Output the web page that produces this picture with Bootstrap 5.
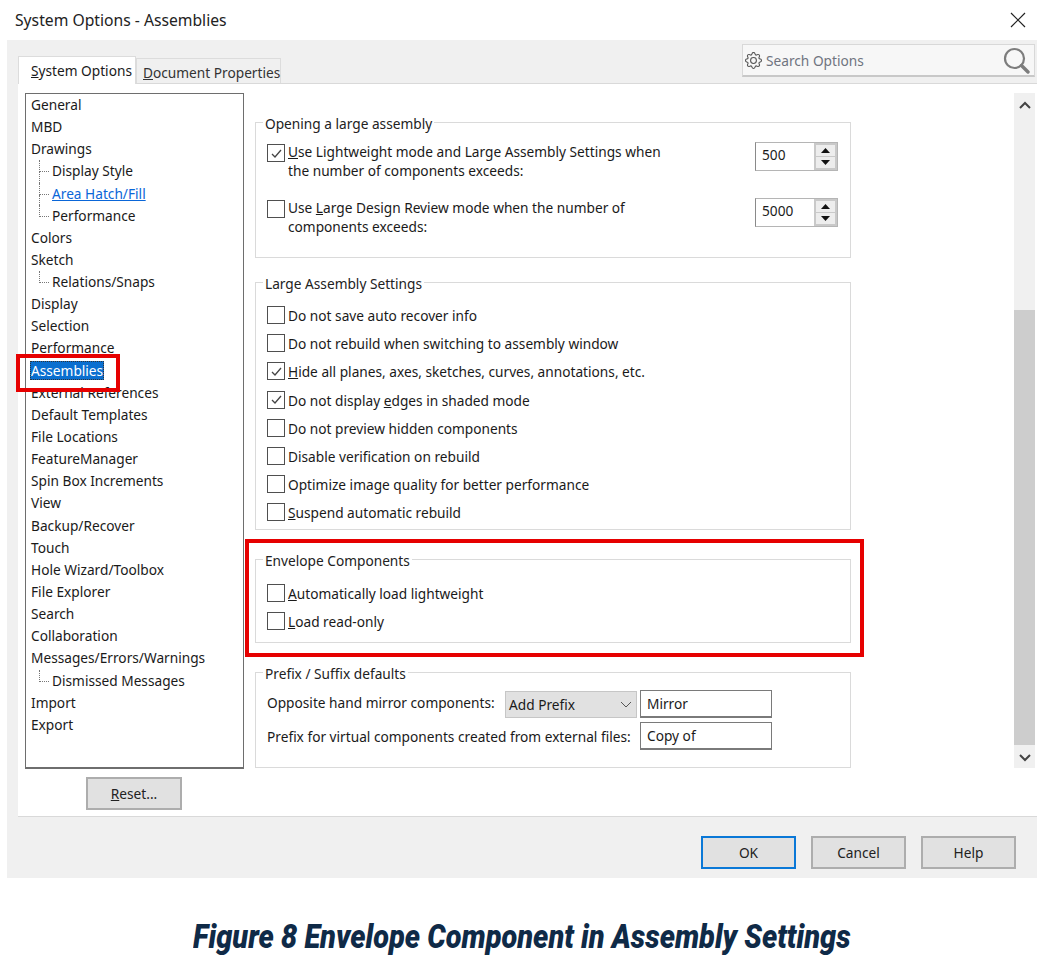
<!DOCTYPE html>
<html lang="en">
<head>
<meta charset="utf-8">
<title>System Options - Assemblies</title>
<link rel="stylesheet" href="https://cdn.jsdelivr.net/npm/bootstrap@5.3.0/dist/css/bootstrap.min.css">
<style>
html,body{margin:0;background:#fff}
body{font-family:"Noto Sans","Open Sans",sans-serif;font-size:13.7px;line-height:19px;color:#1a1a1a}
.sheet{position:relative;width:1044px;height:964px;overflow:hidden}
.titlebar{height:40px;padding-left:15px;font-size:15.7px;color:#222}
.closex{margin-right:18px}
.dlg{width:1030px;height:838px;margin-left:7px;background:#f0f0f0}
.tabstrip{height:43px;padding-left:11px}
.tabon,.taboff{border:1px solid #dcdcdc;border-bottom:0;white-space:nowrap}
.tabon{width:118px;height:28px;background:#fff;padding:4px 0 0 12px;position:relative;z-index:1;margin-bottom:-1px}
.taboff{width:145px;height:25px;background:#f0f0f0;padding:4px 0 0 6px;color:#333}
.searchbox{width:293px;height:33px;margin:4px 2px 0 auto;background:#f7f7f7;border:1px solid #d8d8d8;border-bottom:2px solid #c8c8c8;padding-left:2px;color:#6f7480}
.panel{margin-left:11px;height:734px;background:#fff;border-top:1px solid #d9d9d9;border-bottom:1px solid #d9d9d9;padding:9px 2px 0 7px}
.leftcol{width:219px}
.treebox{height:676px;border:1px solid #6e6e6e;border-bottom-width:2px;padding:0 0 0 5px;line-height:22.14px}
.treebox a{color:#0a66d8;text-decoration:underline}
.branch{margin-left:8px}
.leaf{padding-left:13px;position:relative;height:22.14px}
.leaf::before{content:"";position:absolute;left:0;top:0;height:12px;width:10px;border-left:1px dotted #777;border-bottom:1px dotted #777}
.leaf:not(:last-child)::after{content:"";position:absolute;left:0;top:12px;bottom:0;border-left:1px dotted #777}
.selitem{display:inline-block;background:#0a6fd0;color:#fff;outline:1px dotted #333;outline-offset:-1px;line-height:19px;padding:0 1px;margin-left:-1px}
.resetbtn,.dbtn{height:33px;background:#e1e1e1;border:2px solid #adadad;color:#222;display:flex;align-items:center;justify-content:center;padding:0}
.resetbtn{width:96px;margin:8px 0 0 61px}
.dbtn{width:95px}
.dbtn.isdefault{border-color:#0a78d7}
.midcol{width:596px;margin-left:11px;padding-top:18px}
.grp{border:1px solid #dadada;margin:0;padding:0 12px 0 11px;min-width:0;display:block}
.grp legend{float:none;width:auto;font-size:13.7px;line-height:20px;margin:0 0 0 -4px;padding:3px 2px 0;color:#222}
.g1{height:147px}.g2{height:259px;margin-top:13px}.g3{height:95px;margin-top:18px}.g4{height:107px;margin-top:18px}
.chkrow{display:flex;align-items:flex-start;gap:3px}
.chkbox{flex:none;width:18px;height:18px;border:1px solid #4f4f4f;background:#fff;display:flex;align-items:center;justify-content:center}
.lines2 .chkbox{margin-top:2px}
.g2 .chkrow,.g3 .chkrow{height:28.2px}
.toprow{margin-top:8px}.nextrow{margin-top:18px}
.listtop{margin-top:12px}.envtop{margin-top:13px}
.spinbox{flex:none;width:83px;height:29px;display:flex;border:1px solid #b5b5b5;border-left-color:#8a8a8a;background:#fff}
.spinval{flex:1;padding:2px 0 0 6px}
.spinbtns{width:23px;background:#c9c9c9;padding:2px 2px;display:flex;flex-direction:column;gap:1px}
.spinbtns span{flex:1;background:#ededed;display:flex;align-items:center;justify-content:center}
.optlabel{white-space:nowrap;flex:none}
.lblshort{width:238px;margin-bottom:3px}.lbllong{width:373px}
.prefrow1{margin-top:6px}.prefrow2{margin-top:4px}
.selbox{width:132px;height:27px;margin-right:3px;background:#e1e1e1;border:1px solid #c6c6c6;padding:0 0 0 3px}
.txtin{width:132px;height:28px;border:1px solid #7a7a7a;border-bottom-width:2px;padding:3px 0 0 6px;background:#fff}
.scrolltrack{width:21px;height:675px;margin-left:auto;background:#f0f0f0;display:flex;flex-direction:column}
.thumbtop{height:217px}.thumb{height:435px;background:#cdcdcd}
.footrow{height:62px;padding:19px 21px 0 0;gap:15px}
.caption{text-align:center;margin-top:40px;line-height:38px}
.captext{display:inline-block;font-family:"Roboto",sans-serif;font-weight:900;font-style:italic;font-size:33px;color:#0f2a47;transform:scaleX(.877);white-space:nowrap}
.redbox{position:absolute;border:4px solid #e60000;pointer-events:none}
.rb1{left:16px;top:354px;width:104px;height:38px}
.rb2{left:245px;top:539px;width:619px;height:118px}
</style>
</head>
<body>
<div class="sheet">
  <div class="titlebar d-flex align-items-center justify-content-between">
    <span>System Options - Assemblies</span>
    <svg class="closex" width="16" height="16" viewBox="0 0 16 16"><path d="M1 1 15 15M15 1 1 15" stroke="#222" stroke-width="1.2" fill="none"/></svg>
  </div>
  <div class="dlg">
    <div class="tabstrip d-flex align-items-end">
      <div class="tabon"><u>S</u>ystem Options</div>
      <div class="taboff"><u>D</u>ocument Properties</div>
      <div class="searchbox d-flex align-items-center align-self-start gap-1">
        <svg width="17" height="17" viewBox="0 0 16 16" fill="#555"><path d="M8 4.754a3.246 3.246 0 1 0 0 6.492 3.246 3.246 0 0 0 0-6.492zM5.754 8a2.246 2.246 0 1 1 4.492 0 2.246 2.246 0 0 1-4.492 0z"/><path d="M9.796 1.343c-.527-1.79-3.065-1.79-3.592 0l-.094.319a.873.873 0 0 1-1.255.52l-.292-.16c-1.64-.892-3.433.902-2.54 2.541l.159.292a.873.873 0 0 1-.52 1.255l-.319.094c-1.79.527-1.79 3.065 0 3.592l.319.094a.873.873 0 0 1 .52 1.255l-.16.292c-.892 1.64.901 3.434 2.541 2.54l.292-.159a.873.873 0 0 1 1.255.52l.094.319c.527 1.79 3.065 1.79 3.592 0l.094-.319a.873.873 0 0 1 1.255-.52l.292.16c1.64.893 3.434-.902 2.54-2.541l-.159-.292a.873.873 0 0 1 .52-1.255l.319-.094c1.79-.527 1.79-3.065 0-3.592l-.319-.094a.873.873 0 0 1-.52-1.255l.16-.292c.893-1.64-.902-3.433-2.541-2.54l-.292.159a.873.873 0 0 1-1.255-.52l-.094-.319zm-2.633.283c.246-.835 1.428-.835 1.674 0l.094.319a1.873 1.873 0 0 0 2.693 1.115l.291-.16c.764-.415 1.6.42 1.184 1.185l-.159.292a1.873 1.873 0 0 0 1.116 2.692l.318.094c.835.246.835 1.428 0 1.674l-.319.094a1.873 1.873 0 0 0-1.115 2.693l.16.291c.415.764-.42 1.6-1.185 1.184l-.291-.159a1.873 1.873 0 0 0-2.693 1.116l-.094.318c-.246.835-1.428.835-1.674 0l-.094-.319a1.873 1.873 0 0 0-2.692-1.115l-.292.16c-.764.415-1.6-.42-1.184-1.185l.159-.291A1.873 1.873 0 0 0 1.945 8.930l-.319-.094c-.835-.246-.835-1.428 0-1.674l.319-.094A1.873 1.873 0 0 0 3.060 4.377l-.16-.292c-.415-.764.42-1.6 1.185-1.184l.292.159a1.873 1.873 0 0 0 2.692-1.115l.094-.319z"/></svg>
        <span>Search Options</span>
        <svg class="ms-auto me-1" width="27" height="27" viewBox="0 0 27 27" fill="none" stroke="#7d7d7d"><circle cx="11.500" cy="11.500" r="9.500" stroke-width="2.2"/><path d="M18.500 18.500 25 25" stroke-width="3.4" stroke-linecap="round"/></svg>
      </div>
    </div>
    <div class="panel d-flex">
      <div class="leftcol">
        <div class="treebox">
          <div>General</div><div>MBD</div><div>Drawings</div>
          <div class="branch">
            <div class="leaf">Display Style</div>
            <div class="leaf"><a href="#">Area Hatch/Fill</a></div>
            <div class="leaf">Performance</div>
          </div>
          <div>Colors</div><div>Sketch</div>
          <div class="branch"><div class="leaf">Relations/Snaps</div></div>
          <div>Display</div><div>Selection</div><div>Performance</div>
          <div><span class="selitem">Assemblies</span></div>
          <div>External References</div><div>Default Templates</div><div>File Locations</div><div>FeatureManager</div><div>Spin Box Increments</div><div>View</div><div>Backup/Recover</div><div>Touch</div><div>Hole Wizard/Toolbox</div><div>File Explorer</div><div>Search</div><div>Collaboration</div><div>Messages/Errors/Warnings</div>
          <div class="branch"><div class="leaf">Dismissed Messages</div></div>
          <div>Import</div><div>Export</div>
        </div>
        <button type="button" class="resetbtn"><span><u>R</u>eset...</span></button>
      </div>
      <div class="midcol">
        <fieldset class="grp g1">
          <legend>Opening a large assembly</legend>
          <div class="d-flex justify-content-between toprow">
            <div class="chkrow lines2">
              <span class="chkbox"><svg width="13" height="13" viewBox="0 0 13 13"><path d="M2 7l3 3 6-7" stroke="#444" stroke-width="1.3" fill="none"/></svg></span>
              <span><u>U</u>se Lightweight mode and Large Assembly Settings when<br>the number of components exceeds:</span>
            </div>
            <div class="spinbox"><span class="spinval">500</span><span class="spinbtns"><span><svg width="9" height="5"><path d="M0 5h9L4.500 0z" fill="#111"/></svg></span><span><svg width="9" height="5"><path d="M0 0h9L4.500 5z" fill="#111"/></svg></span></span></div>
          </div>
          <div class="d-flex justify-content-between nextrow">
            <div class="chkrow lines2">
              <span class="chkbox"></span>
              <span>Use <u>L</u>arge Design Review mode when the number of<br>components exceeds:</span>
            </div>
            <div class="spinbox"><span class="spinval">5000</span><span class="spinbtns"><span><svg width="9" height="5"><path d="M0 5h9L4.500 0z" fill="#111"/></svg></span><span><svg width="9" height="5"><path d="M0 0h9L4.500 5z" fill="#111"/></svg></span></span></div>
          </div>
        </fieldset>
        <fieldset class="grp g2">
          <legend>Large Assembly Settings</legend>
          <div class="chkrow listtop"><span class="chkbox"></span><span>Do not save auto recover info</span></div>
          <div class="chkrow"><span class="chkbox"></span><span>Do not rebuild when switching to assembly window</span></div>
          <div class="chkrow"><span class="chkbox"><svg width="13" height="13" viewBox="0 0 13 13"><path d="M2 7l3 3 6-7" stroke="#444" stroke-width="1.3" fill="none"/></svg></span><span><u>H</u>ide all planes, axes, sketches, curves, annotations, etc.</span></div>
          <div class="chkrow"><span class="chkbox"><svg width="13" height="13" viewBox="0 0 13 13"><path d="M2 7l3 3 6-7" stroke="#444" stroke-width="1.3" fill="none"/></svg></span><span>Do not display <u>e</u>dges in shaded mode</span></div>
          <div class="chkrow"><span class="chkbox"></span><span>Do not preview hidden components</span></div>
          <div class="chkrow"><span class="chkbox"></span><span>Disable verification on rebuild</span></div>
          <div class="chkrow"><span class="chkbox"></span><span>Optimize image quality for better performance</span></div>
          <div class="chkrow"><span class="chkbox"></span><span><u>S</u>uspend automatic rebuild</span></div>
        </fieldset>
        <fieldset class="grp g3">
          <legend>Envelope Components</legend>
          <div class="chkrow envtop"><span class="chkbox"></span><span><u>A</u>utomatically load lightweight</span></div>
          <div class="chkrow"><span class="chkbox"></span><span><u>L</u>oad read-only</span></div>
        </fieldset>
        <fieldset class="grp g4">
          <legend>Prefix / Suffix defaults</legend>
          <div class="d-flex align-items-center prefrow1">
            <span class="optlabel lblshort">Opposite hand mirror components:</span>
            <div class="selbox d-flex justify-content-between align-items-center pe-1"><span>Add Prefix</span><svg width="12" height="7" viewBox="0 0 12 7"><path d="M1 1l5 5 5-5" stroke="#555" fill="none"/></svg></div>
            <div class="txtin">Mirror</div>
          </div>
          <div class="d-flex align-items-center prefrow2">
            <span class="optlabel lbllong">Prefix for virtual components created from external files:</span>
            <div class="txtin">Copy of</div>
          </div>
        </fieldset>
      </div>
      <div class="scrolltrack">
        <div class="thumbtop d-flex justify-content-center pt-1"><svg width="14" height="9" viewBox="0 0 14 9" class="mt-1"><path d="M2 7l5-5 5 5" stroke="#444" stroke-width="2" fill="none"/></svg></div>
        <div class="thumb"></div>
        <div class="d-flex justify-content-center pt-2"><svg width="14" height="9" viewBox="0 0 14 9"><path d="M2 2l5 5 5-5" stroke="#444" stroke-width="2" fill="none"/></svg></div>
      </div>
    </div>
    <div class="footrow d-flex justify-content-end">
      <button type="button" class="dbtn isdefault">OK</button>
      <button type="button" class="dbtn">Cancel</button>
      <button type="button" class="dbtn">Help</button>
    </div>
  </div>
  <div class="caption"><span class="captext">Figure 8 Envelope Component in Assembly Settings</span></div>
  <div class="redbox rb1"></div>
  <div class="redbox rb2"></div>
</div>
<script src="https://cdn.jsdelivr.net/npm/bootstrap@5.3.0/dist/js/bootstrap.bundle.min.js"></script>
</body>
</html>
